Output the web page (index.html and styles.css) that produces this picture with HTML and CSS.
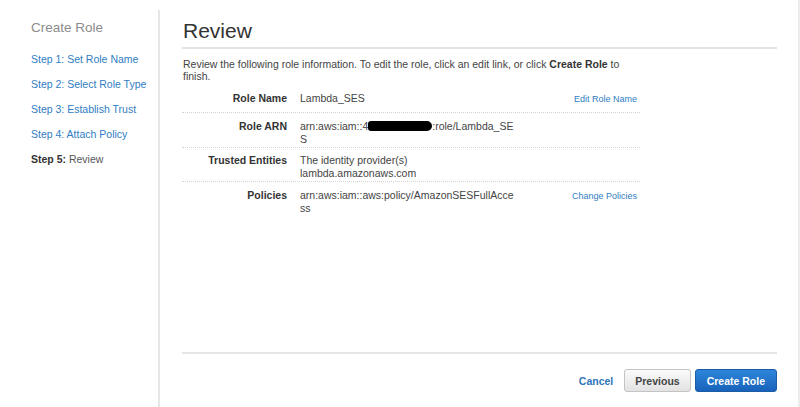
FILE: index.html
```html
<!DOCTYPE html>
<html>
<head>
<meta charset="utf-8">
<link rel="stylesheet" href="styles.css">
</head>
<body>
<div class="page">
  <aside class="sidebar">
    <div class="side-title">Create Role</div>
    <ul class="steps">
      <li><a class="step-link">Step 1: Set Role Name</a></li>
      <li><a class="step-link">Step 2: Select Role Type</a></li>
      <li><a class="step-link">Step 3: Establish Trust</a></li>
      <li><a class="step-link">Step 4: Attach Policy</a></li>
      <li class="step-current"><b>Step 5:</b> Review</li>
    </ul>
  </aside>
  <main class="main">
    <h1 class="heading">Review</h1>
    <p class="desc">Review the following role information. To edit the role, click an edit link, or click <b>Create Role</b> to finish.</p>
    <div class="review">
      <div class="row row-first">
        <div class="label">Role Name</div>
        <div class="value">Lambda_SES</div>
        <div class="action"><a class="edit-link">Edit Role Name</a></div>
      </div>
      <div class="row">
        <div class="label">Role ARN</div>
        <div class="value">arn:aws:iam::4<span class="redact"></span>:role/Lambda_SES</div>
        <div class="action"></div>
      </div>
      <div class="row">
        <div class="label">Trusted Entities</div>
        <div class="value">The identity provider(s)<br>lambda.amazonaws.com</div>
        <div class="action"></div>
      </div>
      <div class="row">
        <div class="label">Policies</div>
        <div class="value">arn:aws:iam::aws:policy/AmazonSESFullAccess</div>
        <div class="action"><a class="edit-link">Change Policies</a></div>
      </div>
    </div>
    <footer class="footer">
      <a class="cancel">Cancel</a>
      <button class="btn btn-prev">Previous</button>
      <button class="btn btn-primary">Create Role</button>
    </footer>
  </main>
</div>
</body>
</html>
```
FILE: styles.css
```css
* { box-sizing: border-box; }
html, body {
  margin: 0;
  padding: 0;
  background: #fff;
  font-family: "Liberation Sans", Arial, sans-serif;
  color: #444;
}
.page {
  display: flex;
  height: 407px;
}
.sidebar {
  width: 160px;
  flex: none;
  margin-top: 10px;
  padding-left: 31px;
  border-right: 2px solid #e6e6e6;
}
.side-title {
  margin-top: 9px;
  font-size: 13.5px;
  line-height: 18px;
  color: #8c8c8c;
}
.steps {
  list-style: none;
  margin: 9.5px 0 0;
  padding: 0;
}
.steps li {
  font-size: 10.5px;
  line-height: 25px;
  white-space: nowrap;
}
.step-link {
  color: #2f7dc2;
  cursor: pointer;
}
.step-current {
  color: #555;
}
.step-current b {
  color: #333;
}
.main {
  flex: 1;
  display: flex;
  flex-direction: column;
  padding: 0 21px 0 22px;
  border-right: 2px solid #ececec;
}
.heading {
  margin: 18px 0 0;
  padding-bottom: 3px;
  font-size: 21px;
  line-height: 26px;
  font-weight: normal;
  color: #333;
  border-bottom: 2px solid #e3e3e3;
}
.heading, .desc { padding-left: 1px; }
.desc {
  width: 458px;
  margin: 9px 0 0;
  font-size: 10.5px;
  line-height: 12px;
  color: #444;
}
.desc b { color: #333; }
.review {
  width: 458px;
  margin-top: 2.5px;
}
.row {
  display: flex;
  padding: 6.5px 0 1px;
  font-size: 10.5px;
  line-height: 13px;
  border-top: 1px dotted #d4d4d4;
}
.row-first {
  border-top: none;
  padding-top: 7px;
  padding-bottom: 6.5px;
}
.label {
  width: 105px;
  flex: none;
  text-align: right;
  font-weight: bold;
  color: #333;
}
.value {
  width: 217px;
  flex: none;
  margin-left: 13px;
  color: #444;
  word-break: break-all;
}
.redact {
  display: inline-block;
  width: 64px;
  height: 10px;
  background: #000;
  border-radius: 3px 5px 5px 3px;
  vertical-align: -1px;
}
.action {
  flex: 1;
  text-align: right;
  padding-right: 3px;
}
.edit-link {
  font-size: 9px;
  color: #2f7dc2;
  cursor: pointer;
}
.footer {
  margin-top: auto;
  display: flex;
  justify-content: flex-end;
  align-items: center;
  padding: 15px 0;
  border-top: 2px solid #e6e6e6;
}
.cancel {
  font-size: 10.5px;
  font-weight: bold;
  color: #2e74b9;
  margin-right: 11px;
  cursor: pointer;
}
.btn {
  height: 23px;
  font-family: "Liberation Sans", Arial, sans-serif;
  font-size: 10.5px;
  font-weight: bold;
  border-radius: 3px;
  cursor: pointer;
}
.btn-prev {
  padding: 0 10px;
  color: #444;
  background: linear-gradient(#fbfbfb, #e2e2e2);
  border: 1px solid #c4c4c4;
  margin-right: 4px;
}
.btn-primary {
  padding: 0 11px;
  color: #fff;
  background: linear-gradient(#2d86d9, #1862bb);
  border: 1px solid #1b5ca6;
}
```
